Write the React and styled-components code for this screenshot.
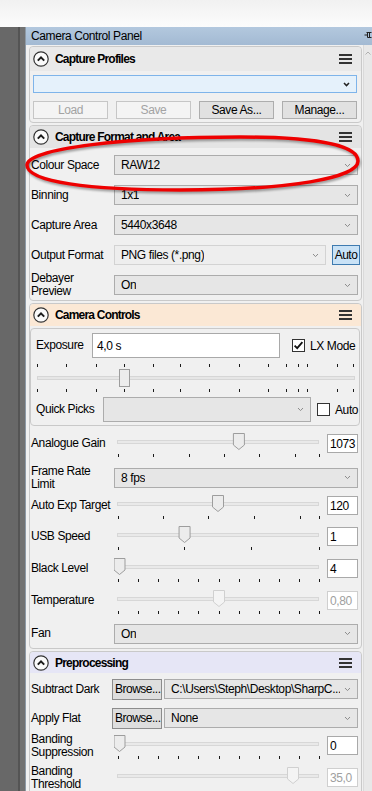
import React from "react";
import styled, { createGlobalStyle } from "styled-components";

const GlobalStyle = createGlobalStyle`
  * { box-sizing: border-box; }
  html, body { margin: 0; padding: 0; background: #ffffff; }
  body {
    font-family: "Liberation Sans", Arial, sans-serif;
    font-size: 12px;
    letter-spacing: -0.4px;
    color: #000;
  }
`;

const Screen = styled.div`
  position: relative;
  width: 372px;
  height: 791px;
  overflow: hidden;
  display: flex;
  flex-direction: column;
`;

const TopStrip = styled.div`
  flex: none;
  height: 27px;
  background: linear-gradient(#f1f1f1, #fcfcfc);
`;

const Workspace = styled.div`
  flex: 1;
  min-height: 0;
  display: flex;
`;

const DockEdge = styled.div`
  flex: none;
  width: 25px;
  background: linear-gradient(to right, #686868 0 18px, #545454 18px 20px, #727272 20px 25px);
`;

const Panel = styled.div`
  flex: 1;
  min-width: 0;
  display: flex;
  flex-direction: column;
  background: #f0f0f0;
  border-left: 1px solid #8e9aa6;
`;

const TitleBar = styled.div`
  flex: none;
  height: 18px;
  display: flex;
  align-items: center;
  justify-content: space-between;
  padding-left: 5px;
  background: linear-gradient(#b3c8de, #a3bad3);
`;

const Body = styled.div`
  flex: 1;
  min-height: 0;
  display: flex;
`;

const Stack = styled.div`
  flex: 1;
  min-width: 0;
  padding: 1px 1px 0 3px;
  display: flex;
  flex-direction: column;
  gap: 2px;
`;

const ScrollTrack = styled.div`
  flex: none;
  width: 9px;
  background: #e8e8e8;
  border-left: 1px solid #dadada;
  display: flex;
  justify-content: center;
  padding-top: 6px;
`;

const Section = styled.section`
  flex: none;
  border: 1px solid #c9c9c9;
  border-radius: 4px;
  background: #f0f0f0;
  overflow: hidden;
`;

const SectionHead = styled.header`
  height: ${(p) => p.$h}px;
  display: flex;
  align-items: center;
  gap: 6px;
  padding: 0 9px 0 3px;
  background: ${(p) => p.$tint};
  border-radius: 3px 3px 0 0;
`;

const SectionTitle = styled.h2`
  margin: 0;
  flex: 1;
  font-size: 12px;
  font-weight: bold;
  letter-spacing: -0.8px;
  color: #000;
`;

const ProfileBody = styled.div`
  padding: 4px 4px 3px 3px;
  display: flex;
  flex-direction: column;
  gap: 8px;
`;

const ButtonRow = styled.div`
  display: grid;
  grid-template-columns: repeat(4, 1fr);
  gap: 8px;
`;

const PushButton = styled.button`
  height: 18px;
  padding: 0;
  font: inherit;
  letter-spacing: inherit;
  border: 1px solid ${(p) => (p.disabled ? "#c6c6c6" : "#adadad")};
  background: ${(p) => (p.disabled ? "#f4f4f4" : "#e1e1e1")};
  color: ${(p) => (p.disabled ? "#a3a3a3" : "#000")};
`;

const BrowseButton = styled.button`
  flex: none;
  width: 50px;
  height: 21px;
  padding: 0 0 0 2px;
  margin-right: 2px;
  font: inherit;
  letter-spacing: -0.5px;
  text-align: left;
  white-space: nowrap;
  overflow: hidden;
  border: 1px solid #8c8c8c;
  background: #dedede;
  color: #000;
`;

const AutoButton = styled.button`
  flex: none;
  width: 28px;
  height: 20px;
  margin: 0 -2px 0 6px;
  padding: 0;
  font: inherit;
  letter-spacing: -0.5px;
  border: 1px solid #3f7bb0;
  background: #c9e2f6;
  color: #000;
`;

const FieldList = styled.div`
  padding-top: ${(p) => p.$top || 0}px;
`;

const FieldRow = styled.div`
  display: flex;
  align-items: center;
  height: ${(p) => p.$h}px;
  padding: 0 3px 0 1px;
`;

const SliderRow = styled.div`
  display: flex;
  align-items: flex-start;
  height: ${(p) => p.$h}px;
  padding: 3px 3px 0 1px;
`;

const FieldLabel = styled.span`
  flex: none;
  width: ${(p) => p.$w || 83}px;
  height: ${(p) => (p.$box ? "19px" : "auto")};
  display: flex;
  align-items: center;
  line-height: 13px;
  white-space: nowrap;
`;

const Combo = styled.div`
  flex: 1;
  min-width: 0;
  height: ${(p) => p.$h || 20}px;
  display: flex;
  align-items: center;
  justify-content: space-between;
  gap: 4px;
  padding: 0 6px 0 6px;
  border: 1px solid ${(p) => (p.$focus ? "#7eb4ea" : p.$dim ? "#d3d3d3" : "#acacac")};
  background: ${(p) => (p.$focus ? "#e5f1fb" : p.$dim ? "#eeeeee" : "#e6e6e6")};
  white-space: nowrap;
  overflow: hidden;
`;

const ProfileCombo = styled(Combo)`
  flex: none;
`;

const ComboText = styled.span`
  overflow: hidden;
`;

const ValueBox = styled.div`
  flex: none;
  width: 31px;
  height: 19px;
  margin-left: 5px;
  padding-left: 2px;
  display: flex;
  align-items: center;
  background: #fff;
  border: 1px solid ${(p) => (p.$off ? "#cfcfcf" : "#a9a9a9")};
  color: ${(p) => (p.$off ? "#a0a0a0" : "#000")};
`;

const SliderArt = styled.svg`
  flex: none;
  display: block;
  margin-top: -1px;
`;

const SubPanel = styled.div`
  margin: 2px 1px 0 0;
  height: 98px;
  border: 1px solid #c9c9c9;
  border-radius: 4px;
  padding: 4px 4px 3px 5px;
  display: flex;
  flex-direction: column;
`;

const ExposureRow = styled.div`
  display: flex;
  align-items: center;
  height: 25px;
`;

const TextInput = styled.div`
  flex: none;
  width: 188px;
  height: 25px;
  margin-right: 12px;
  padding-left: 4px;
  display: flex;
  align-items: center;
  background: #fff;
  border: 1px solid #a9a9a9;
`;

const CheckLabel = styled.span`
  display: flex;
  align-items: center;
  gap: 5px;
  white-space: nowrap;
`;

const ExposureArt = styled.svg`
  flex: none;
  display: block;
  margin-top: 3px;
`;

const QuickRow = styled.div`
  display: flex;
  align-items: center;
  height: 25px;
  margin-top: 2px;
`;

const QuickCombo = styled(Combo)`
  flex: none;
  width: 208px;
  margin-right: 6px;
`;

const Overlay = styled.svg`
  position: absolute;
  left: 0;
  top: 0;
  pointer-events: none;
  filter: drop-shadow(1px 2px 1px rgba(0, 0, 0, 0.35));
`;

const Chevron = ({ strong }) => (
  <svg width="7" height="5" viewBox="0 0 7 5">
    <path
      d="M1 1 L3.5 3.6 L6 1"
      fill="none"
      stroke={strong ? "#222" : "#8c8c8c"}
      strokeWidth={strong ? 1.5 : 1}
    />
  </svg>
);

const CollapseIcon = () => (
  <svg width="16" height="16" viewBox="0 0 16 16">
    <circle cx="8" cy="8" r="7.2" fill="#fafafa" stroke="#333" strokeWidth="1.2" />
    <path d="M4.8 9.6 L8 6.4 L11.2 9.6" fill="none" stroke="#1a1a1a" strokeWidth="2" />
  </svg>
);

const MenuIcon = () => (
  <svg width="13" height="10" viewBox="0 0 13 10">
    <rect x="0" y="0" width="13" height="2" fill="#333" />
    <rect x="0" y="4" width="13" height="2" fill="#333" />
    <rect x="0" y="8" width="13" height="2" fill="#333" />
  </svg>
);

const CheckBox = ({ checked }) => (
  <svg width="13" height="13" viewBox="0 0 13 13">
    <rect x="0.5" y="0.5" width="12" height="12" fill="#fff" stroke="#333" />
    {checked && <path d="M2.6 6.6 L5.2 9.2 L10.4 3.2" fill="none" stroke="#111" strokeWidth="1.8" />}
  </svg>
);

const PinIcon = () => (
  <svg width="8" height="10" viewBox="0 0 8 10">
    <path d="M2.5 1.5 H7.5 M3.5 1.5 V6.5 H7.5 M0.5 4 H3.5 M5.5 1.5 V6.5" fill="none" stroke="#222" />
  </svg>
);

const UpArrow = () => (
  <svg width="6" height="4" viewBox="0 0 6 4">
    <path d="M0.5 3.5 L3 1 L5.5 3.5" fill="none" stroke="#b0b0b0" />
  </svg>
);

const tenths = [0, 0.1, 0.2, 0.3, 0.4, 0.5, 0.6, 0.7, 0.8, 0.9, 1];

function TickSlider({ value, ticks = [], disabled }) {
  const cx = 5.5 + value * 199;
  return (
    <SliderArt width="208" height="27" viewBox="0 0 208 27">
      <rect x="3.5" y="7.5" width="201" height="3" fill="#e9e9e9" stroke="#d7d7d7" />
      {ticks.map((t, i) => (
        <rect key={i} x={4 + Math.round(t * 201)} y="21" width="1" height="3" fill="#1a1a1a" />
      ))}
      <path
        d={`M${cx - 5.5} 0.5 H${cx + 5.5} V12 L${cx} 16.5 L${cx - 5.5} 12 Z`}
        fill={disabled ? "#f4f4f4" : "#ececec"}
        stroke={disabled ? "#d0d0d0" : "#9d9d9d"}
      />
    </SliderArt>
  );
}

const expTicks = [1, 30, 60, 88, 117, 144, 173, 203, 232, 250, 262, 271, 301, 317];

function ExposureSlider() {
  return (
    <ExposureArt width="321" height="34" viewBox="0 0 321 34">
      {expTicks.map((x) => (
        <rect key={"t" + x} x={x} y="3" width="1" height="3" fill="#1a1a1a" />
      ))}
      <rect x="1.5" y="15.5" width="317" height="3" fill="#e6e6e6" stroke="#d6d6d6" />
      <rect x="83.5" y="8.5" width="10" height="17" fill="#ececec" stroke="#9d9d9d" />
      {expTicks.map((x) => (
        <rect key={"b" + x} x={x} y="28" width="1" height="3" fill="#1a1a1a" />
      ))}
    </ExposureArt>
  );
}

function SectionHeader({ title, tint, h }) {
  return (
    <SectionHead $tint={tint} $h={h}>
      <CollapseIcon />
      <SectionTitle>{title}</SectionTitle>
      <MenuIcon />
    </SectionHead>
  );
}

function TwoLines({ lines }) {
  return (
    <span>
      {lines[0]}
      <br />
      {lines[1]}
    </span>
  );
}

function ComboRow({ label, value, h = 30, lines }) {
  return (
    <FieldRow $h={h}>
      <FieldLabel>{lines ? <TwoLines lines={lines} /> : label}</FieldLabel>
      <Combo>
        <ComboText>{value}</ComboText>
        <Chevron />
      </Combo>
    </FieldRow>
  );
}

function SliderField({ label, lines, h, value, ticks, box, off }) {
  return (
    <SliderRow $h={h}>
      <FieldLabel $box>{lines ? <TwoLines lines={lines} /> : label}</FieldLabel>
      <TickSlider value={value} ticks={ticks} disabled={off} />
      <ValueBox $off={off}>{box}</ValueBox>
    </SliderRow>
  );
}

export default function App() {
  return (
    <Screen>
      <GlobalStyle />
      <TopStrip />
      <Workspace>
        <DockEdge />
        <Panel>
          <TitleBar>
            <span>Camera Control Panel</span>
            <PinIcon />
          </TitleBar>
          <Body>
            <Stack>
              <Section>
                <SectionHeader title="Capture Profiles" tint="#e9e9e9" h={24} />
                <ProfileBody>
                  <ProfileCombo $focus $h={18}>
                    <ComboText />
                    <Chevron strong />
                  </ProfileCombo>
                  <ButtonRow>
                    <PushButton disabled>Load</PushButton>
                    <PushButton disabled>Save</PushButton>
                    <PushButton>Save As...</PushButton>
                    <PushButton>Manage...</PushButton>
                  </ButtonRow>
                </ProfileBody>
              </Section>

              <Section>
                <SectionHeader title="Capture Format and Area" tint="#e4e4e4" h={22} />
                <FieldList $top={2}>
                  <ComboRow label="Colour Space" value="RAW12" />
                  <ComboRow label="Binning" value="1x1" />
                  <ComboRow label="Capture Area" value="5440x3648" />
                  <FieldRow $h={30}>
                    <FieldLabel>Output Format</FieldLabel>
                    <Combo $dim>
                      <ComboText>PNG files (*.png)</ComboText>
                      <Chevron />
                    </Combo>
                    <AutoButton>Auto</AutoButton>
                  </FieldRow>
                  <ComboRow lines={["Debayer", "Preview"]} value="On" />
                </FieldList>
              </Section>

              <Section>
                <SectionHeader title="Camera Controls" tint="#fbe8d5" h={22} />
                <SubPanel>
                  <ExposureRow>
                    <FieldLabel $w={56}>Exposure</FieldLabel>
                    <TextInput>4,0 s</TextInput>
                    <CheckLabel>
                      <CheckBox checked />
                      LX Mode
                    </CheckLabel>
                  </ExposureRow>
                  <ExposureSlider />
                  <QuickRow>
                    <FieldLabel $w={67}>Quick Picks</FieldLabel>
                    <QuickCombo $h={25}>
                      <ComboText />
                      <Chevron />
                    </QuickCombo>
                    <CheckLabel>
                      <CheckBox />
                      Auto
                    </CheckLabel>
                  </QuickRow>
                </SubPanel>
                <FieldList $top={5}>
                  <SliderField
                    label="Analogue Gain"
                    h={31}
                    value={0.6}
                    ticks={[0, 0.174, 0.353, 0.527, 0.701, 0.88, 1]}
                    box="1073"
                  />
                  <ComboRow lines={["Frame Rate", "Limit"]} value="8 fps" h={31} />
                  <SliderField
                    label="Auto Exp Target"
                    h={31}
                    value={0.495}
                    ticks={[0, 0.224, 0.448, 0.677, 0.905, 1]}
                    box="120"
                  />
                  <SliderField label="USB Speed" h={32} value={0.327} ticks={[0, 0.328, 0.662, 1]} box="1" />
                  <SliderField label="Black Level" h={32} value={0} ticks={tenths} box="4" />
                  <SliderField label="Temperature" h={31} value={0.5} ticks={tenths} box="0,80" off />
                  <ComboRow label="Fan" value="On" h={29} />
                </FieldList>
              </Section>

              <Section>
                <SectionHeader title="Preprocessing" tint="#e6e6f6" h={21} />
                <FieldList $top={2}>
                  <FieldRow $h={28}>
                    <FieldLabel $w={81}>Subtract Dark</FieldLabel>
                    <BrowseButton>Browse...</BrowseButton>
                    <Combo>
                      <ComboText>C:\Users\Steph\Desktop\SharpC...</ComboText>
                      <Chevron />
                    </Combo>
                  </FieldRow>
                  <FieldRow $h={30}>
                    <FieldLabel $w={81}>Apply Flat</FieldLabel>
                    <BrowseButton>Browse...</BrowseButton>
                    <Combo>
                      <ComboText>None</ComboText>
                      <Chevron />
                    </Combo>
                  </FieldRow>
                  <SliderField
                    lines={["Banding", "Suppression"]}
                    h={32}
                    value={0}
                    ticks={tenths}
                    box="0"
                  />
                  <SliderField lines={["Banding", "Threshold"]} h={32} value={0.872} box="35,0" off />
                </FieldList>
              </Section>
            </Stack>
            <ScrollTrack>
              <UpArrow />
            </ScrollTrack>
          </Body>
        </Panel>
      </Workspace>

      <Overlay width="372" height="200" viewBox="0 0 372 200">
        <path
          d="M27 165 C27 148 130 137 240 137 C320 137 358 146 358 161 C358 178 290 190 180 190 C90 190 27 182 27 165 Z"
          fill="none"
          stroke="#ee0000"
          strokeWidth="3.5"
        />
      </Overlay>
    </Screen>
  );
}
